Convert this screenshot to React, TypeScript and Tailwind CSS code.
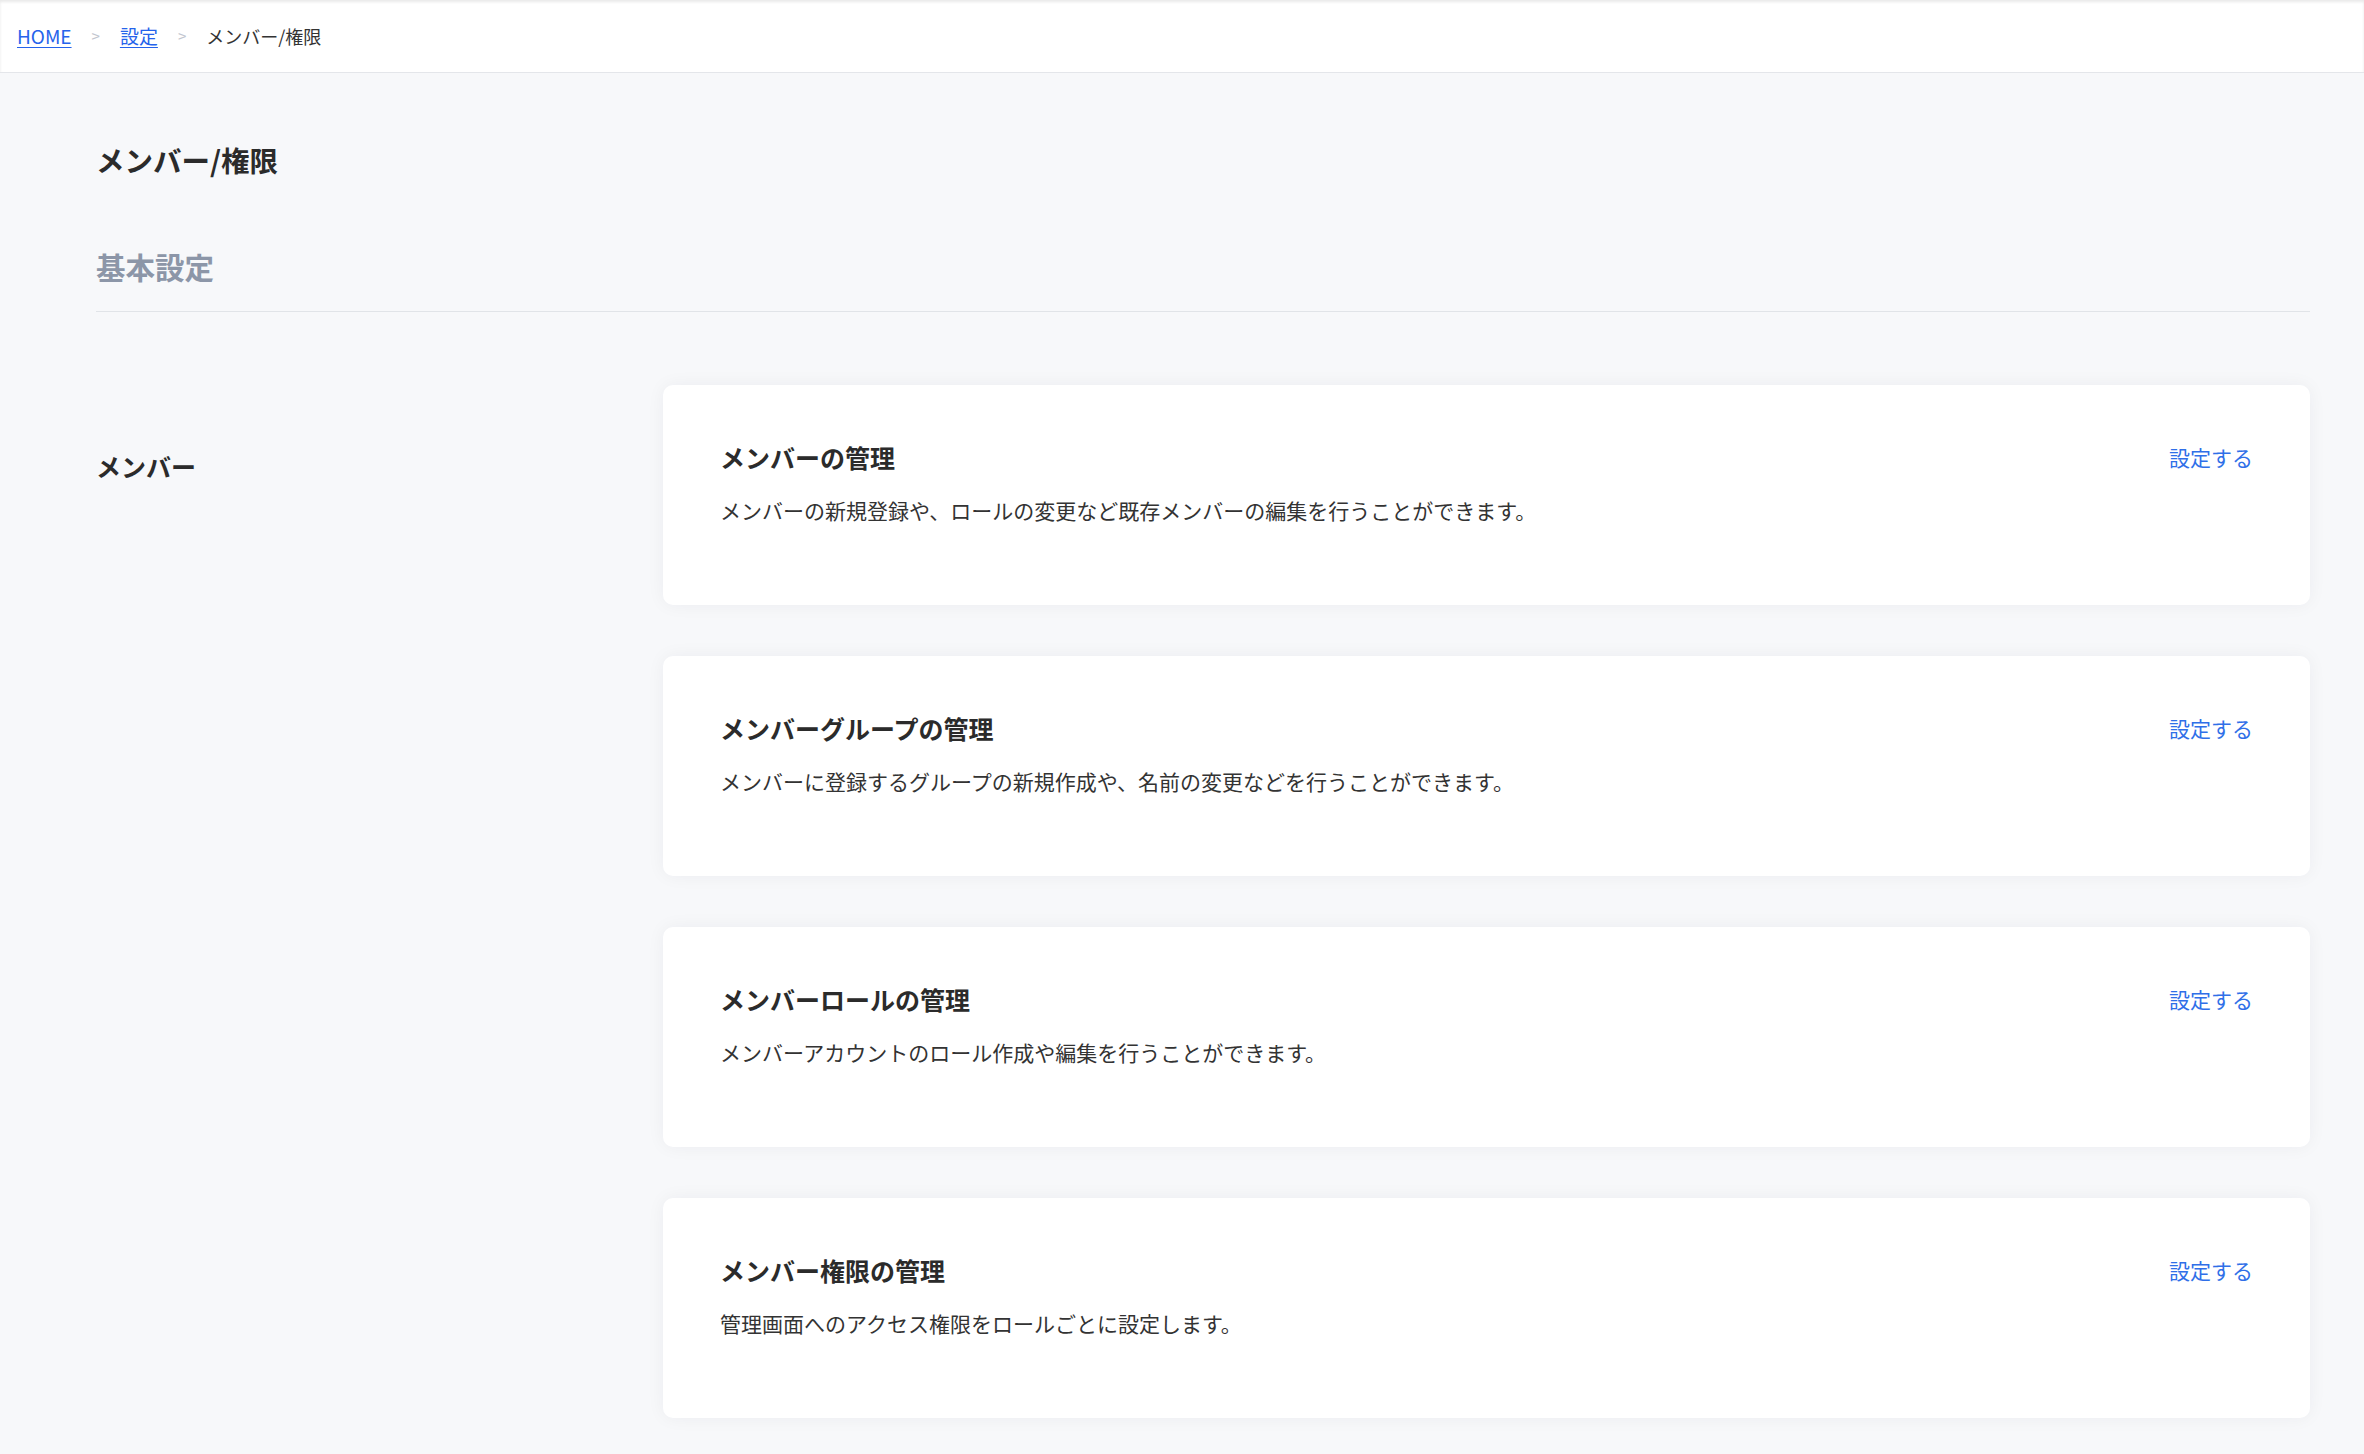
import React from "react";

const cards = [
  {
    title: "メンバーの管理",
    desc: "メンバーの新規登録や、ロールの変更など既存メンバーの編集を行うことができます。",
  },
  {
    title: "メンバーグループの管理",
    desc: "メンバーに登録するグループの新規作成や、名前の変更などを行うことができます。",
  },
  {
    title: "メンバーロールの管理",
    desc: "メンバーアカウントのロール作成や編集を行うことができます。",
  },
  {
    title: "メンバー権限の管理",
    desc: "管理画面へのアクセス権限をロールごとに設定します。",
  },
];

export default function App() {
  return (
    <div
      className="min-h-screen bg-[#f7f8fa] text-[#333333]"
      style={{ fontFamily: '"Noto Sans CJK JP", "Noto Sans", sans-serif' }}
    >
      <header className="h-[73px] bg-white border-b border-[#e4e6ea] shadow-[inset_0_2px_3px_rgba(0,0,0,0.09)] flex items-center pl-[17px] text-[19px]">
        <a href="#" className="text-[#2563eb] underline underline-offset-[3px]">
          HOME
        </a>
        <span className="px-[20px] text-[#c2c6cf] text-[15px]">&gt;</span>
        <a href="#" className="text-[#2563eb] underline underline-offset-[3px]">
          設定
        </a>
        <span className="px-[20px] text-[#c2c6cf] text-[15px]">&gt;</span>
        <span className="text-[#333333] text-[18px]">メンバー/権限</span>
      </header>

      <main className="pl-[96px] pr-[54px] pb-[35px]">
        <h1 className="mt-[67px] text-[28.5px] leading-[40px] font-bold text-[#2b2b2b]">
          メンバー/権限
        </h1>
        <div className="mt-[66px] pb-[25px] border-b border-[#e1e4e8]">
          <h2 className="text-[29.5px] leading-[40px] font-bold text-[#8c96a8]">基本設定</h2>
        </div>

        <section className="mt-[73px] flex">
          <div className="w-[567px] shrink-0 pt-[63px]">
            <h3 className="text-[25px] leading-[36px] font-bold text-[#2b2b2b]">メンバー</h3>
          </div>
          <div className="flex-1 flex flex-col gap-[51px]">
            {cards.map((c) => (
              <div
                key={c.title}
                className="h-[220px] bg-white rounded-[10px] shadow-[0_0_18px_rgba(20,30,60,0.05)] pl-[57px] pr-[57px] pt-[54px] flex items-start justify-between"
              >
                <div>
                  <div className="text-[25px] leading-[36px] font-bold text-[#2b2b2b]">{c.title}</div>
                  <div className="mt-[19px] text-[21px] leading-[32px] text-[#333333]">{c.desc}</div>
                </div>
                <a href="#" className="text-[21px] leading-[36px] text-[#2f6fe8] whitespace-nowrap">
                  設定する
                </a>
              </div>
            ))}
          </div>
        </section>
      </main>
    </div>
  );
}
